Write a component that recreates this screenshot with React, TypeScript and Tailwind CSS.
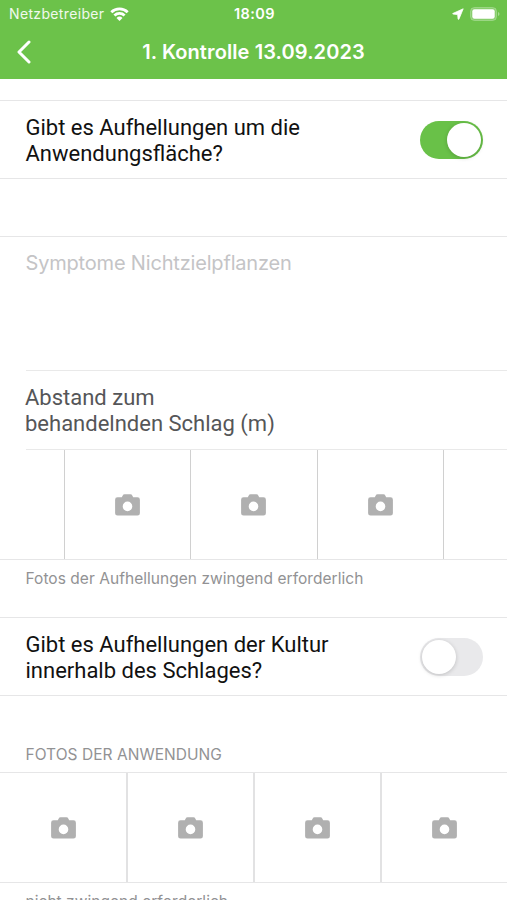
import React from 'react';

const CameraIcon: React.FC = () => (
  <svg className="w-[25px] h-[22px]" viewBox="0 0 25 22" fill="#b0b0b0">
    <path
      fillRule="evenodd"
      d="M7.600 1.700Q8.200.3 9.600.3h5.800q1.400 0 2 1.400l.8 1.600h4.300q2.400 0 2.400 2.400v13.500q0 2.400-2.400 2.400H2.500Q.1 21.600.1 19.200V5.700q0-2.400 2.400-2.400h4.300zM12.500 7.600a4.800 4.800 0 1 0 0 9.600a4.800 4.800 0 0 0 0-9.600z"
    />
  </svg>
);

const Toggle: React.FC<{ checked: boolean }> = ({ checked }) => (
  <button
    type="button"
    role="switch"
    aria-checked={checked}
    className={`flex items-center w-[63px] h-[38px] px-[2px] rounded-full ${checked ? 'justify-end bg-[#69c148]' : 'justify-start bg-[#e9e9eb]'}`}
  >
    <span className="w-[34px] h-[34px] rounded-full bg-white shadow-[0_1px_4px_rgba(0,0,0,0.18)]" />
  </button>
);

const ToggleRow: React.FC<{ lines: string[]; checked: boolean }> = ({ lines, checked }) => (
  <div className="flex items-center justify-between h-[79px] pl-[25.500px] pr-6 border-y border-[#e6e6e7]">
    <p className="pt-[2px] font-[Roboto,sans-serif] text-[22px] leading-[26px] text-[#111] whitespace-nowrap">
      {lines.map((line) => (
        <span key={line} className="block">{line}</span>
      ))}
    </p>
    <Toggle checked={checked} />
  </div>
);

const StatusBar: React.FC = () => (
  <div className="grid grid-cols-3 items-center h-[27px] pl-[9px] pr-[7px] text-[14px] text-white">
    <div className="flex items-center gap-[6px]">
      <span className="tracking-[0.35px] text-white/90">Netzbetreiber</span>
      <svg className="w-[19px] h-[14px]" viewBox="0 0 19 14" fill="none" stroke="white" strokeWidth="2.800">
        <path d="M1.300 5.200a11.700 11.700 0 0 1 16.400 0" />
        <path d="M4.400 8.500a7.300 7.300 0 0 1 10.200 0" />
        <path d="M6.500 10.900a4.300 4.300 0 0 1 6 0L9.500 13.900z" fill="white" stroke="none" />
      </svg>
    </div>
    <span className="text-center text-[14.500px] font-semibold tracking-[0.4px]">18:09</span>
    <div className="flex items-center justify-end gap-[6px]">
      <svg className="w-[12px] h-[12px]" viewBox="0 0 12 12" fill="white" stroke="white" strokeWidth=".8" strokeLinejoin="round">
        <path d="M11.200.8L.8 5.500q-.3.500.3.600L5.300 6.500q.3 0 .4.400l.4 4.200q.3.600.8.100z" />
      </svg>
      <svg className="w-[30px] h-[14px]" viewBox="0 0 30 14">
        <rect x=".5" y=".5" width="26" height="13" rx="4" fill="white" fillOpacity=".2" stroke="white" strokeOpacity=".25" />
        <rect x="2.300" y="2.300" width="22.400" height="9.400" rx="2.200" fill="white" />
        <path d="M28 5q1.500.4 1.500 2T28 9z" fill="white" fillOpacity=".4" />
      </svg>
    </div>
  </div>
);

export default function App() {
  return (
    <div className="w-[507px] h-[900px] overflow-hidden bg-white font-[Inter,sans-serif]">
      <header className="h-[79px] bg-[#6cc24a]">
        <StatusBar />
        <div className="grid grid-cols-[60px_1fr_60px] items-center h-[50px] text-white">
          <svg className="ml-[16px] w-4 h-6" viewBox="0 0 16 24" fill="none" stroke="white" strokeWidth="3" strokeLinecap="round" strokeLinejoin="round">
            <path d="M13 2L3 12L13 22" />
          </svg>
          <h1 className="text-center text-[20px] font-semibold tracking-[0.1px] whitespace-nowrap">1. Kontrolle 13.09.2023</h1>
        </div>
      </header>

      <main className="pt-[21px]">
        <ToggleRow lines={['Gibt es Aufhellungen um die', 'Anwendungsfläche?']} checked />

        <section className="mt-[57px] border-y border-[#e6e6e7]">
          <div className="h-[133px] pl-[25.500px] pt-3 text-[20px] leading-[28px] tracking-[-0.18px] text-[#c4c4c6]">
            Symptome Nichtzielpflanzen
          </div>
          <div className="ml-[26px] -indent-px h-[80px] pt-[14px] border-y border-[#e9e9e9] font-[Roboto,sans-serif] text-[22px] leading-[26px] text-[#555658]">
            <p>Abstand zum</p>
            <p>behandelnden Schlag (m)</p>
          </div>
          <div className="flex h-[109px] ml-[64px]">
            {[0, 1, 2].map((slot) => (
              <div key={slot} className="flex items-center justify-center w-[126.300px] border-l border-[#d0d0d0]">
                <CameraIcon />
              </div>
            ))}
            <div className="border-l border-[#d0d0d0]" />
          </div>
        </section>
        <p className="h-[57px] pl-[25.500px] pt-[7px] text-[15.500px] leading-6 tracking-[0.04px] text-[#929294]">
          Fotos der Aufhellungen zwingend erforderlich
        </p>

        <ToggleRow lines={['Gibt es Aufhellungen der Kultur', 'innerhalb des Schlages?']} checked={false} />

        <h2 className="h-[76px] pl-[25.500px] pt-[47px] text-[15.500px] leading-6 tracking-[0.04px] text-[#929294]">FOTOS DER ANWENDUNG</h2>
        <div className="grid grid-cols-[128px_127px_127px_1fr] h-[111px] border-y border-[#e6e6e7] divide-x-2 divide-[#e2e2e3]">
          {[0, 1, 2, 3].map((slot) => (
            <div key={slot} className="flex items-center justify-center">
              <CameraIcon />
            </div>
          ))}
        </div>
        <p className="pl-[25.500px] pt-[7px] text-[15.500px] leading-6 tracking-[0.04px] text-[#929294]">nicht zwingend erforderlich</p>
      </main>
    </div>
  );
}
